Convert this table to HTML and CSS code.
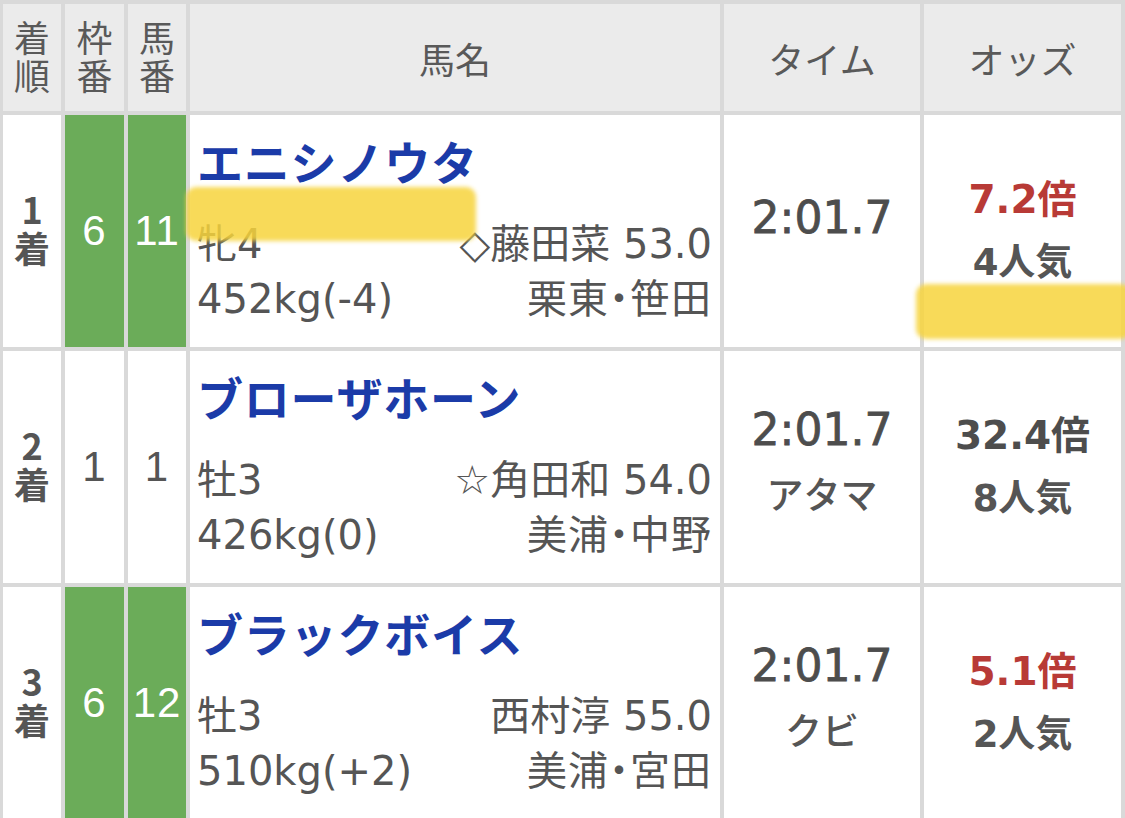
FILE: index.html
```html
<!DOCTYPE html>
<html lang="ja">
<head>
<meta charset="utf-8">
<title>レース結果</title>
<link rel="stylesheet" href="styles.css">
</head>
<body>
<div class="wrap">
  <div class="table">
    <div class="th"><span class="vert">着順</span></div>
    <div class="th"><span class="vert">枠番</span></div>
    <div class="th"><span class="vert">馬番</span></div>
    <div class="th">馬名</div>
    <div class="th">タイム</div>
    <div class="th">オッズ</div>

    <div class="td rank"><span class="vert">1着</span></div>
    <div class="td waku green">6</div>
    <div class="td umaban green">11</div>
    <div class="td horse">
      <div class="name">エニシノウタ</div>
      <div class="line first"><span>牝4</span><span>◇藤田菜 53.0</span></div>
      <div class="line"><span>452kg(-4)</span><span class="stable">栗東・笹田</span></div>
    </div>
    <div class="td time"><div class="t">2:01.7</div><div class="sub empty"></div></div>
    <div class="td odds"><div class="o red">7.2倍</div><div class="p">4人気</div></div>

    <div class="td rank"><span class="vert">2着</span></div>
    <div class="td waku">1</div>
    <div class="td umaban">1</div>
    <div class="td horse">
      <div class="name">ブローザホーン</div>
      <div class="line first"><span>牡3</span><span>☆角田和 54.0</span></div>
      <div class="line"><span>426kg(0)</span><span class="stable">美浦・中野</span></div>
    </div>
    <div class="td time"><div class="t">2:01.7</div><div class="sub">アタマ</div></div>
    <div class="td odds"><div class="o">32.4倍</div><div class="p">8人気</div></div>

    <div class="td rank"><span class="vert">3着</span></div>
    <div class="td waku green">6</div>
    <div class="td umaban green">12</div>
    <div class="td horse">
      <div class="name">ブラックボイス</div>
      <div class="line first"><span>牡3</span><span>西村淳 55.0</span></div>
      <div class="line"><span>510kg(+2)</span><span class="stable">美浦・宮田</span></div>
    </div>
    <div class="td time"><div class="t">2:01.7</div><div class="sub">クビ</div></div>
    <div class="td odds"><div class="o red">5.1倍</div><div class="p">2人気</div></div>
  </div>
  <div class="mark mark-name"></div>
  <div class="mark mark-odds"></div>
</div>
</body>
</html>
```

FILE: styles.css
```css
html, body {
  margin: 0;
  padding: 0;
  background: #ffffff;
}
body {
  width: 1125px;
  height: 818px;
  overflow: hidden;
  font-family: "DejaVu Sans", "Noto Sans CJK JP", sans-serif;
  color: #555555;
}
.wrap {
  position: relative;
}
.table {
  display: grid;
  grid-template-columns: 58px 59px 58px 530px 196px 197px;
  grid-template-rows: 107px 232px 232px 232px;
  gap: 4px;
  padding: 4px 4px 0 3px;
  background: #d9d9d9;
}
.th {
  background: #ebebeb;
  display: flex;
  align-items: center;
  justify-content: center;
  font-family: "Noto Sans CJK JP", sans-serif;
  font-size: 36px;
  font-weight: 400;
  color: #595959;
}
.vert {
  writing-mode: vertical-rl;
  text-orientation: upright;
  letter-spacing: 2px;
  line-height: 1;
}
.td {
  background: #ffffff;
  display: flex;
  flex-direction: column;
  align-items: center;
  justify-content: center;
}
.td.green {
  background: #6bac59;
  color: #ffffff;
}
.rank {
  font-family: "Noto Sans CJK JP", sans-serif;
  font-size: 36px;
  font-weight: 700;
  color: #555555;
}
.rank .vert {
  letter-spacing: 3px;
}
.waku, .umaban {
  font-family: "Liberation Sans", "Noto Sans CJK JP", sans-serif;
  font-size: 42px;
  letter-spacing: 1px;
  color: #555555;
}
.horse {
  align-items: stretch;
  justify-content: flex-start;
  padding: 20px 8px 0 7px;
}
.name {
  font-family: "Noto Sans CJK JP", sans-serif;
  font-weight: 700;
  font-size: 46px;
  line-height: 50px;
  color: #1b3ba8;
  letter-spacing: 0.8px;
}
.line {
  display: flex;
  justify-content: space-between;
  font-size: 40px;
  line-height: 55px;
  color: #555555;
}
.line.first {
  margin-top: 32px;
}
.stable {
  font-feature-settings: "palt";
  letter-spacing: 1px;
}
.time {
  padding-bottom: 8px;
}
.t {
  font-size: 44px;
  font-weight: 400;
  line-height: 60px;
  color: #4d4d4d;
  -webkit-text-stroke: 0.8px #4d4d4d;
}
.sub {
  font-family: "Noto Sans CJK JP", sans-serif;
  font-size: 37px;
  font-weight: 500;
  line-height: 66px;
  color: #555555;
}
.sub.empty {
  height: 18px;
}
.odds .o {
  font-size: 39px;
  font-weight: 700;
  line-height: 63px;
  color: #4d4d4d;
}
.odds .o.red {
  color: #b83a36;
}
.odds .p {
  font-size: 37px;
  font-weight: 700;
  line-height: 63px;
  color: #555555;
}
.mark {
  position: absolute;
  background: rgba(247, 211, 60, 0.85);
  border-radius: 10px;
  filter: blur(2px);
}
.mark-name {
  left: 186px;
  top: 187px;
  width: 290px;
  height: 54px;
}
.mark-odds {
  left: 916px;
  top: 284px;
  width: 215px;
  height: 55px;
}
```
